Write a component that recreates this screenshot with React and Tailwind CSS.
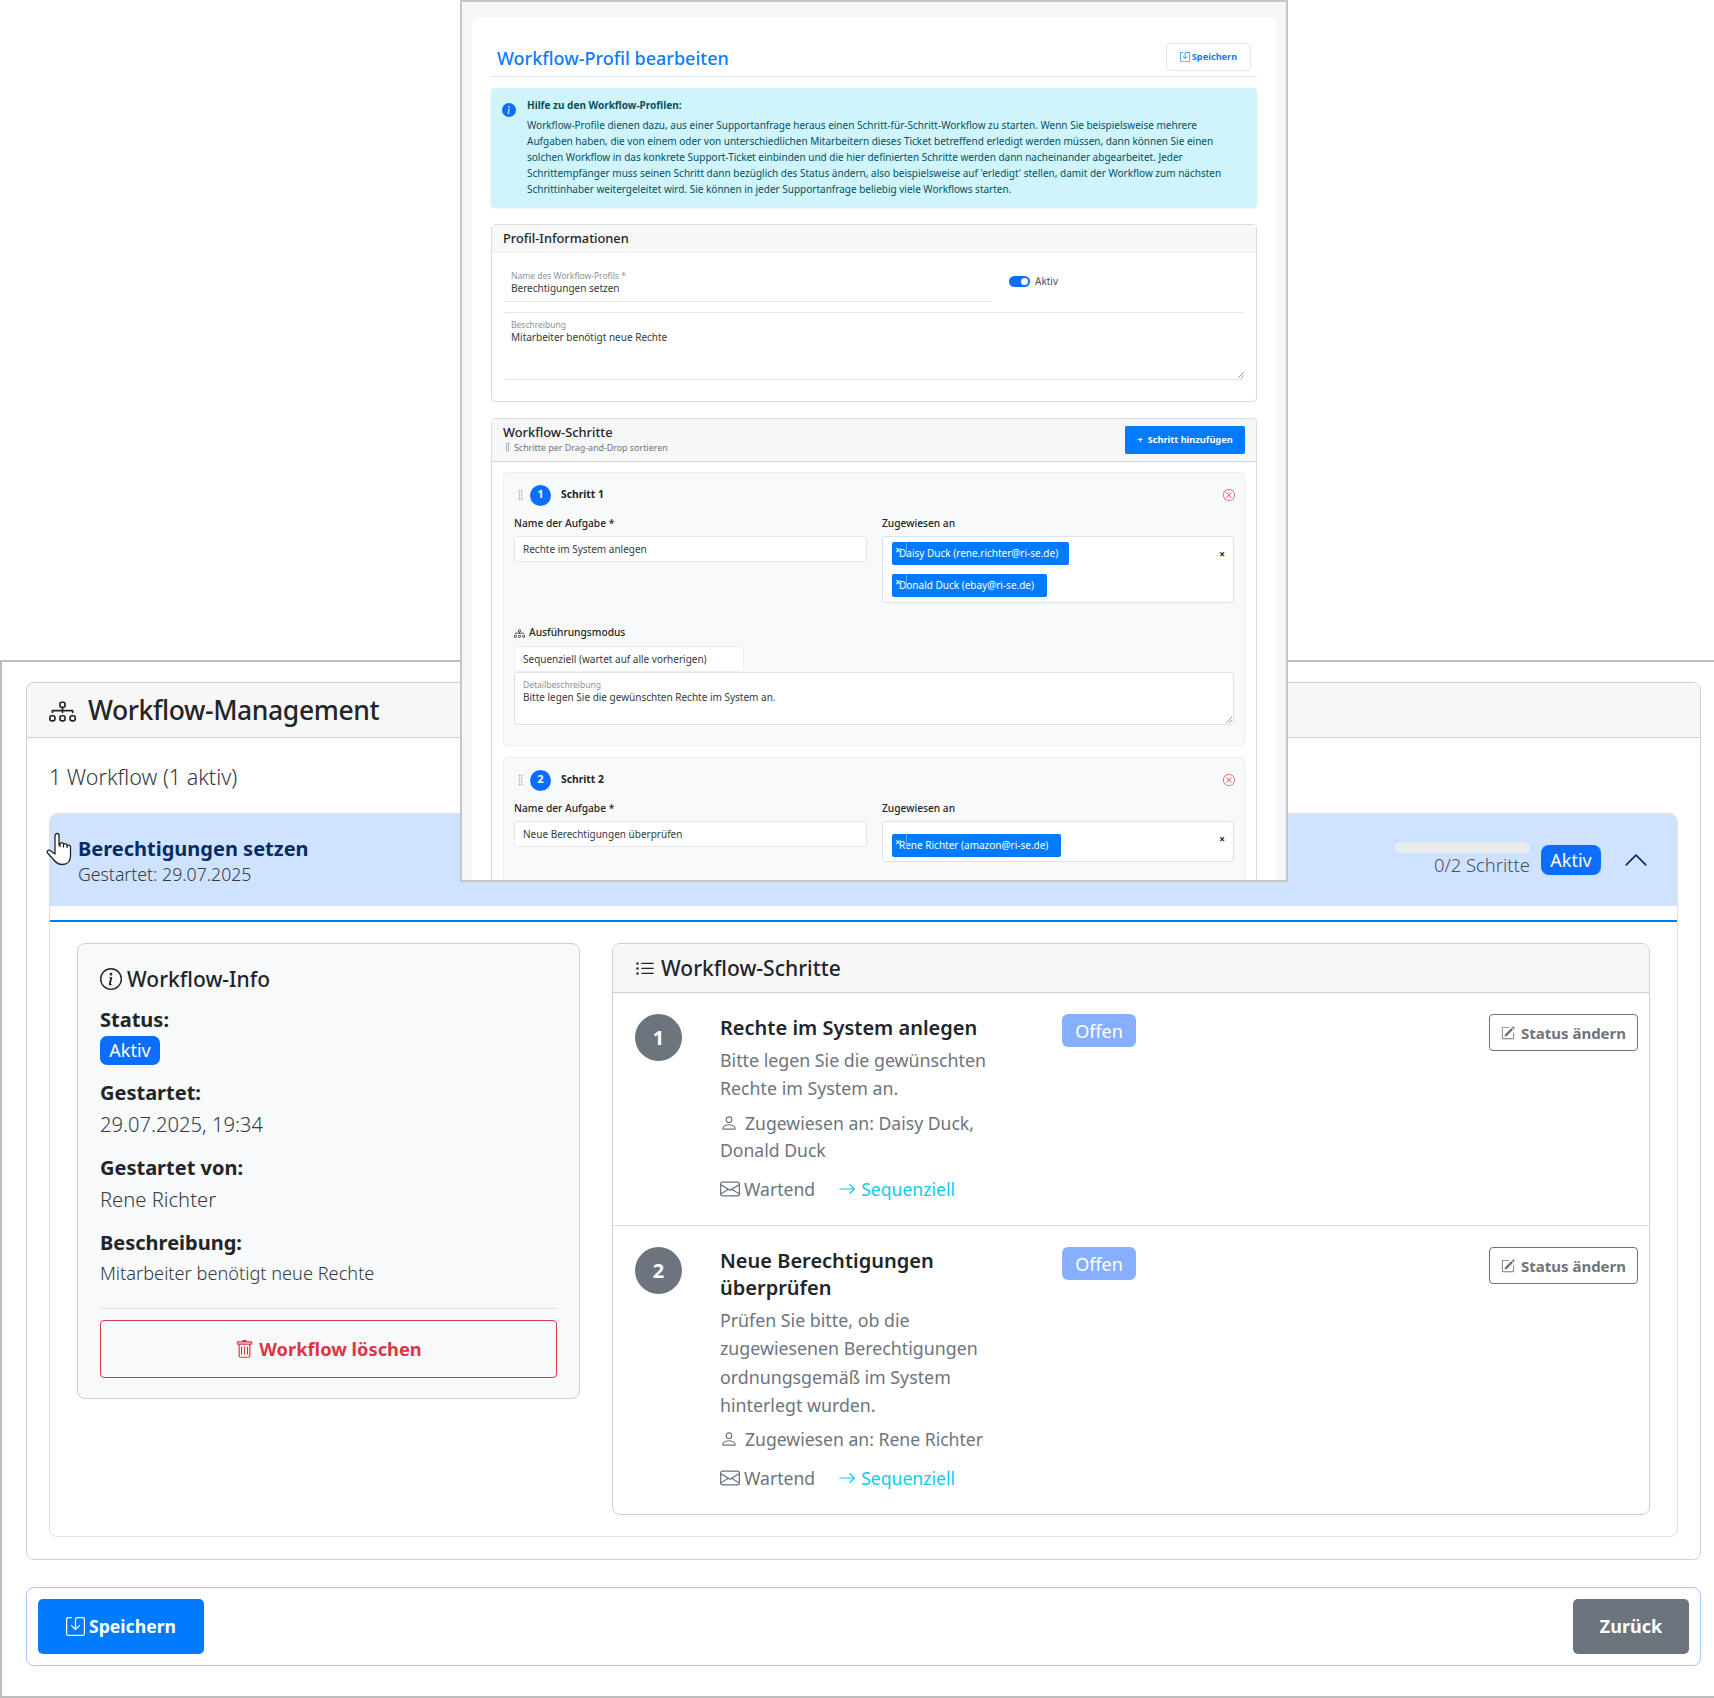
import {
  BsArrowRight,
  BsChevronUp,
  BsDiagram3,
  BsEnvelope,
  BsGripVertical,
  BsInfoCircle,
  BsInfoCircleFill,
  BsListUl,
  BsPencilSquare,
  BsPerson,
  BsSave,
  BsTrash,
  BsXCircle,
} from "react-icons/bs";

const font = "font-['Noto_Sans',sans-serif]";

function HandCursor() {
  return (
    <svg viewBox="0 0 26 34" className="absolute left-[-4px] top-[18px] h-[34px] w-[26px]">
      <path
        d="M9 19V3.500a2 2 0 0 1 4 0V13l1-.5v2-2.500a1.800 1.800 0 0 1 3.500 0v3-2a1.800 1.800 0 0 1 3.500 0v2.500-1a1.800 1.800 0 0 1 3.500 0V24c0 5-3 8.500-8 8.500-4 0-6.500-1.500-9-5L1.500 21c-1-1.500.5-3.500 2.500-2.500L9 22z"
        fill="#fff"
        stroke="#222"
        strokeWidth="1.300"
        strokeLinejoin="round"
      />
    </svg>
  );
}

function Chip({ children, width }) {
  return (
    <div className={`relative flex h-[23px] items-center rounded-[2px] bg-[#007bff] pl-[7px] text-[10px] whitespace-nowrap text-white ${width}`}>
      <span className="absolute left-[3px] top-[1px] text-[10px] leading-[14px]">×</span>
      <span className="absolute left-[14px] top-0 h-[15px] w-px bg-[#5aa7f5]"></span>
      {children}
    </div>
  );
}

function EditorStep({ number, name, chips, boxHeight, children }) {
  return (
    <div className="mb-[11px] rounded-[4px] border border-[#eef0f2] bg-[#f8f9fa] px-[10px] pt-[11px]">
      <div className="flex h-[22px] items-center">
        <BsGripVertical className="ml-[1px] text-[12px] text-[#aaa]" />
        <span className="ml-[3px] flex h-[21px] w-[21px] items-center justify-center rounded-full bg-[#0d6efd] text-[10.500px] font-bold text-white">
          {number}
        </span>
        <span className="ml-[10px] text-[10.300px] font-bold text-[#212529]">Schritt {number}</span>
        <BsXCircle className="ml-auto mr-[-1px] text-[12px] text-[#e0525f]" />
      </div>
      <div className="mt-[7px] flex gap-[15px]">
        <div className="w-[353px]">
          <div className="h-[20px] text-[10.200px] leading-[20px] font-medium text-[#212529]">Name der Aufgabe *</div>
          <div className="mt-[3px] flex h-[26px] items-center rounded-[3px] border border-[#e4e7ea] bg-white px-[8px] text-[10px] text-[#343a40]">
            {name}
          </div>
        </div>
        <div className="flex-1">
          <div className="h-[20px] text-[10.200px] leading-[20px] font-medium text-[#212529]">Zugewiesen an</div>
          <div className={`relative mt-[3px] flex flex-col gap-[9px] rounded-[3px] border border-[#dde1e5] bg-white px-[9px] ${boxHeight}`}>
            {chips}
            <span className="absolute right-[8px] top-[10px] text-[10px] leading-[14px] font-bold text-[#222]">×</span>
          </div>
        </div>
      </div>
      {children}
    </div>
  );
}

function WorkflowStep({ number, title, description, assigned, assignedClass, offset }) {
  return (
    <div className="flex pl-[22px] pr-[11px] pt-[21px]">
      <span className="flex h-[47px] w-[47px] shrink-0 items-center justify-center rounded-full bg-[#6c757d] text-[20px] font-bold text-white">
        {number}
      </span>
      <div className="ml-[38px] w-[322px]">
        <h5 className="text-[20px] leading-[27px] font-semibold text-[#212529]">{title}</h5>
        <p className="mt-[5px] w-[285px] text-[17.800px] leading-[28.400px] text-[#6c757d]">{description}</p>
        <div className={`text-[17.600px] leading-[27.500px] text-[#6c757d] ${assignedClass}`}>
          <BsPerson className="mr-[7px] inline-block align-[-2px] text-[18px]" />
          Zugewiesen an: {assigned}
        </div>
        <div className={`flex items-center text-[17.600px] leading-[28px] text-[#6c757d] ${offset}`}>
          <BsEnvelope className="mr-[4px] text-[20px]" />
          Wartend
          <span className="ml-[23px] flex items-center text-[#0dcaf0]">
            <BsArrowRight className="mr-[5px] text-[18px]" />
            Sequenziell
          </span>
        </div>
      </div>
      <span className="ml-[20px] flex h-[33px] w-[74px] items-center justify-center rounded-[6px] bg-[#86b0ff] pt-px text-[18px] text-white">
        Offen
      </span>
      <button className="ml-auto flex h-[37px] w-[149px] items-center justify-center gap-[6px] rounded-[4px] border border-[#6c757d] pt-px text-[15px] font-bold text-[#6c757d]">
        <BsPencilSquare className="text-[14px]" />
        Status ändern
      </button>
    </div>
  );
}

function InfoRow({ label, value, spacing }) {
  return (
    <div className={spacing}>
      <div className="text-[20px] leading-[30px] font-bold text-[#212529]">{label}</div>
      <div className="text-[20.200px] leading-[32px] font-light text-[#343a40]">{value}</div>
    </div>
  );
}

function ResizeHandle() {
  return (
    <svg viewBox="0 0 6 6" className="absolute bottom-px right-px h-[6px] w-[6px]">
      <path d="M0 6 6 0M3 6 6 3" stroke="#777" strokeWidth="0.700" />
    </svg>
  );
}

function EditorWindow() {
  return (
    <div className="absolute left-[460px] top-0 h-[882px] w-[828px] overflow-hidden border-2 border-[#c4c6c8] bg-[#f4f6f8] px-[10px] pt-[15px]">
      <div className="h-[900px] rounded-t-[6px] bg-white px-[19px]">
        <div className="flex h-[60px] items-end justify-between border-b border-[#d9eaff] pb-[1px]">
          <h1 className="mb-[2px] ml-[6px] text-[18px] leading-[30px] font-medium text-[#0d7bff]">Workflow-Profil bearbeiten</h1>
          <button className="mb-[4px] mr-[6px] flex h-[28px] w-[85px] items-center justify-center gap-[2px] rounded-[3px] border border-[#dfe9f7] text-[9.200px] font-bold text-[#0d7bff]">
            <BsSave className="text-[10px]" />
            Speichern
          </button>
        </div>
        <div className="mt-[11px] flex h-[119px] rounded-[4px] bg-[#cff4fc] pl-[11px] pt-[9px] text-[10px] text-[#055160] shadow-sm">
          <BsInfoCircleFill className="mt-[6px] shrink-0 text-[14px] text-[#0d6efd]" />
          <div className="ml-[11px] whitespace-nowrap">
            <div className="mb-[4px] leading-[16px] font-bold">Hilfe zu den Workflow-Profilen:</div>
            <p className="leading-[16.100px]">
              Workflow-Profile dienen dazu, aus einer Supportanfrage heraus einen Schritt-für-Schritt-Workflow zu starten. Wenn Sie beispielsweise mehrere
              <br />
              Aufgaben haben, die von einem oder von unterschiedlichen Mitarbeitern dieses Ticket betreffend erledigt werden müssen, dann können Sie einen
              <br />
              solchen Workflow in das konkrete Support-Ticket einbinden und die hier definierten Schritte werden dann nacheinander abgearbeitet. Jeder
              <br />
              Schrittempfänger muss seinen Schritt dann bezüglich des Status ändern, also beispielsweise auf 'erledigt' stellen, damit der Workflow zum nächsten
              <br />
              Schrittinhaber weitergeleitet wird. Sie können in jeder Supportanfrage beliebig viele Workflows starten.
            </p>
          </div>
        </div>
        <section className="mt-[17px] h-[178px] rounded-[4px] border border-[#d9dcdf]">
          <div className="flex h-[28px] items-center border-b border-[#eee] bg-[#f7f7f7] px-[11px] pt-px text-[12.800px] font-medium text-[#212529]">
            Profil-Informationen
          </div>
          <div className="px-[11px] pt-[10px]">
            <div className="flex">
              <div className="h-[39px] w-[490px] rounded-[3px] border-b border-[#e4e7ea] px-[8px] pt-[6px]">
                <div className="text-[8.500px] leading-[13px] text-[#8b9299]">Name des Workflow-Profils *</div>
                <div className="text-[10px] leading-[13px] text-[#343a40]">Berechtigungen setzen</div>
              </div>
              <div className="ml-[16px] mt-[11px] flex h-[14px] items-center text-[10px] text-[#495057]">
                <span className="flex h-[11px] w-[21px] items-center justify-end rounded-full bg-[#0d6efd] pr-[2px]">
                  <span className="h-[7px] w-[7px] rounded-full bg-white"></span>
                </span>
                <span className="ml-[5px] pt-px">Aktiv</span>
              </div>
            </div>
            <div className="relative mt-[10px] h-[68px] rounded-[3px] border-t border-b border-[#e4e7ea] px-[8px] pt-[5px]">
              <div className="text-[8.500px] leading-[13px] text-[#8b9299]">Beschreibung</div>
              <div className="text-[10px] leading-[13px] text-[#343a40]">Mitarbeiter benötigt neue Rechte</div>
              <ResizeHandle />
            </div>
          </div>
        </section>
        <section className="mt-[16px] rounded-t-[4px] border border-[#d9dcdf]">
          <div className="flex h-[43px] items-center justify-between border-b border-[#d5d8db] bg-[#f7f7f7] pl-[11px] pr-[11px]">
            <div className="mb-[4px]">
              <div className="text-[12.800px] leading-[18px] font-medium text-[#212529]">Workflow-Schritte</div>
              <div className="flex items-center text-[8.900px] leading-[13px] text-[#6c757d]">
                <BsGripVertical className="mr-[1px] text-[10px]" />
                Schritte per Drag-and-Drop sortieren
              </div>
            </div>
            <button className="flex h-[28px] w-[120px] items-center justify-center gap-[5px] rounded-[2px] bg-[#007bff] text-[9.200px] font-bold text-white">
              <span>+</span>
              Schritt hinzufügen
            </button>
          </div>
          <div className="px-[11px] pt-[10px]">
            <EditorStep
              number="1"
              name="Rechte im System anlegen"
              boxHeight="h-[67px] pt-[5px]"
              chips={
                <>
                  <Chip width="w-[177px]">Daisy Duck (rene.richter@ri-se.de)</Chip>
                  <Chip width="w-[155px]">Donald Duck (ebay@ri-se.de)</Chip>
                </>
              }
            >
              <div className="mt-[20px] flex h-[20px] items-center text-[10.200px] font-medium text-[#212529]">
                <BsDiagram3 className="mr-[4px] text-[11px]" />
                Ausführungsmodus
              </div>
              <div className="mt-[3px] flex h-[26px] w-[230px] items-center rounded-[3px] border border-[#eceef0] bg-white px-[8px] text-[10px] text-[#343a40]">
                Sequenziell (wartet auf alle vorherigen)
              </div>
              <div className="relative mb-[20px] h-[53px] rounded-[3px] border border-[#dfe2e5] bg-white px-[8px] pt-[5px]">
                <div className="text-[8.500px] leading-[13px] text-[#8b9299]">Detailbeschreibung</div>
                <div className="text-[10px] leading-[13px] text-[#343a40]">Bitte legen Sie die gewünschten Rechte im System an.</div>
                <ResizeHandle />
              </div>
            </EditorStep>
            <EditorStep
              number="2"
              name="Neue Berechtigungen überprüfen"
              boxHeight="h-[41px] pt-[12px]"
              chips={<Chip width="w-[169px]">Rene Richter (amazon@ri-se.de)</Chip>}
            >
              <div className="h-[40px]"></div>
            </EditorStep>
          </div>
        </section>
      </div>
    </div>
  );
}

export default function App() {
  return (
    <div className={`relative h-[1698px] overflow-hidden bg-white ${font}`}>
      <main className="mt-[660px] h-[1038px] border-t-2 border-b-2 border-l-2 border-[#bdbdbd] pt-[20px] pl-[24px] pr-[13px]">
        <section className="rounded-[8px] border border-[#cfcfcf]">
          <header className="flex h-[55px] items-center rounded-t-[8px] border-b border-[#cfcfcf] bg-[#f7f7f7] pl-[22px] pt-[2px]">
            <BsDiagram3 className="mr-[12px] text-[27px] text-[#212529]" />
            <h3 className="text-[26.500px] font-medium tracking-[-0.4px] text-[#212529]">Workflow-Management</h3>
          </header>
          <div className="px-[22px] pb-[22px]">
            <p className="mt-[24px] mb-[21px] text-[21.500px] leading-[30px] font-light text-[#343a40]">1 Workflow (1 aktiv)</p>
            <div className="rounded-[8px] border border-[#dee2e6]">
              <div className="relative flex h-[92px] items-center justify-between rounded-t-[8px] bg-[#cfe2ff] pl-[28px] pr-[28px]">
                <HandCursor />
                <div className="pt-px">
                  <div className="text-[20px] leading-[26px] font-bold text-[#052c65]">Berechtigungen setzen</div>
                  <div className="text-[17.700px] leading-[24px] font-light text-[#343a40]">Gestartet: 29.07.2025</div>
                </div>
                <div className="flex items-center">
                  <div className="flex w-[135px] flex-col items-end">
                    <span className="h-[11px] w-[135px] rounded-full bg-[#e9ecef]"></span>
                    <span className="mt-[-1px] text-[18.400px] leading-[26px] font-light whitespace-nowrap text-[#495057]">0/2 Schritte</span>
                  </div>
                  <span className="ml-[11px] flex h-[30px] w-[60px] items-center justify-center rounded-[8px] bg-[#0d6efd] text-[18px] text-white">
                    Aktiv
                  </span>
                  <BsChevronUp className="ml-[22px] text-[26px] text-[#052c65]" />
                </div>
              </div>
              <div className="mt-[14px] flex gap-[32px] border-t-2 border-[#007bff] px-[27px] pt-[21px] pb-[21px]">
                <aside className="h-[456px] w-[503px] shrink-0 rounded-[8px] border border-[#cfcfcf] bg-[#f8f9fa] px-[22px] pt-[19px]">
                  <h4 className="flex items-center text-[21px] leading-[32px] font-medium text-[#212529]">
                    <BsInfoCircle className="mr-[5px] text-[22px]" />
                    Workflow-Info
                  </h4>
                  <div className="mt-[10px] text-[20px] leading-[30px] font-bold text-[#212529]">Status:</div>
                  <span className="mt-[1px] flex h-[29px] w-[60px] items-center justify-center rounded-[7px] bg-[#0d6efd] text-[18px] text-white">
                    Aktiv
                  </span>
                  <InfoRow label="Gestartet:" value="29.07.2025, 19:34" spacing="mt-[13px]" />
                  <InfoRow label="Gestartet von:" value="Rene Richter" spacing="mt-[13px]" />
                  <div className="mt-[13px] text-[20px] leading-[30px] font-bold text-[#212529]">Beschreibung:</div>
                  <div className="mt-[1px] text-[18.200px] leading-[28px] font-light text-[#343a40]">Mitarbeiter benötigt neue Rechte</div>
                  <hr className="mt-[21px] border-[#dfe2e5]" />
                  <button className="mt-[11px] flex h-[58px] w-full items-center justify-center gap-[5px] rounded-[4px] border border-[#dc3545] text-[18.300px] font-bold text-[#dc3545]">
                    <BsTrash className="text-[19px]" />
                    Workflow löschen
                  </button>
                </aside>
                <div className="h-[572px] flex-1 rounded-[8px] border border-[#cfcfcf]">
                  <div className="flex h-[49px] items-center rounded-t-[8px] border-b border-[#cfcfcf] bg-[#f7f7f7] pl-[22px] pt-px text-[21px] font-medium text-[#212529]">
                    <BsListUl className="mr-[6px] text-[20px]" />
                    Workflow-Schritte
                  </div>
                  <div className="h-[233px] border-b border-[#dfdfdf]">
                    <WorkflowStep
                      number="1"
                      title="Rechte im System anlegen"
                      description="Bitte legen Sie die gewünschten Rechte im System an."
                      assigned="Daisy Duck, Donald Duck"
                      assignedClass="mt-[7px] w-[270px]"
                      offset="mt-[10px]"
                    />
                  </div>
                  <WorkflowStep
                    number="2"
                    title="Neue Berechtigungen überprüfen"
                    description="Prüfen Sie bitte, ob die zugewiesenen Berechtigungen ordnungsgemäß im System hinterlegt wurden."
                    assigned="Rene Richter"
                    assignedClass="mt-[6px] w-[322px]"
                    offset="mt-[11px]"
                  />
                </div>
              </div>
            </div>
          </div>
        </section>
        <footer className="mt-[27px] flex h-[79px] items-center justify-between rounded-[8px] border border-[#a8c8f5] pr-[11px] pl-[11px]">
          <button className="flex h-[55px] w-[166px] items-center justify-center gap-[4px] rounded-[5px] bg-[#007bff] text-[17.600px] font-bold text-white">
            <BsSave className="text-[19px]" />
            Speichern
          </button>
          <button className="h-[55px] w-[116px] rounded-[5px] bg-[#6c757d] text-[18px] font-bold text-white">Zurück</button>
        </footer>
      </main>
      <EditorWindow />
    </div>
  );
}
